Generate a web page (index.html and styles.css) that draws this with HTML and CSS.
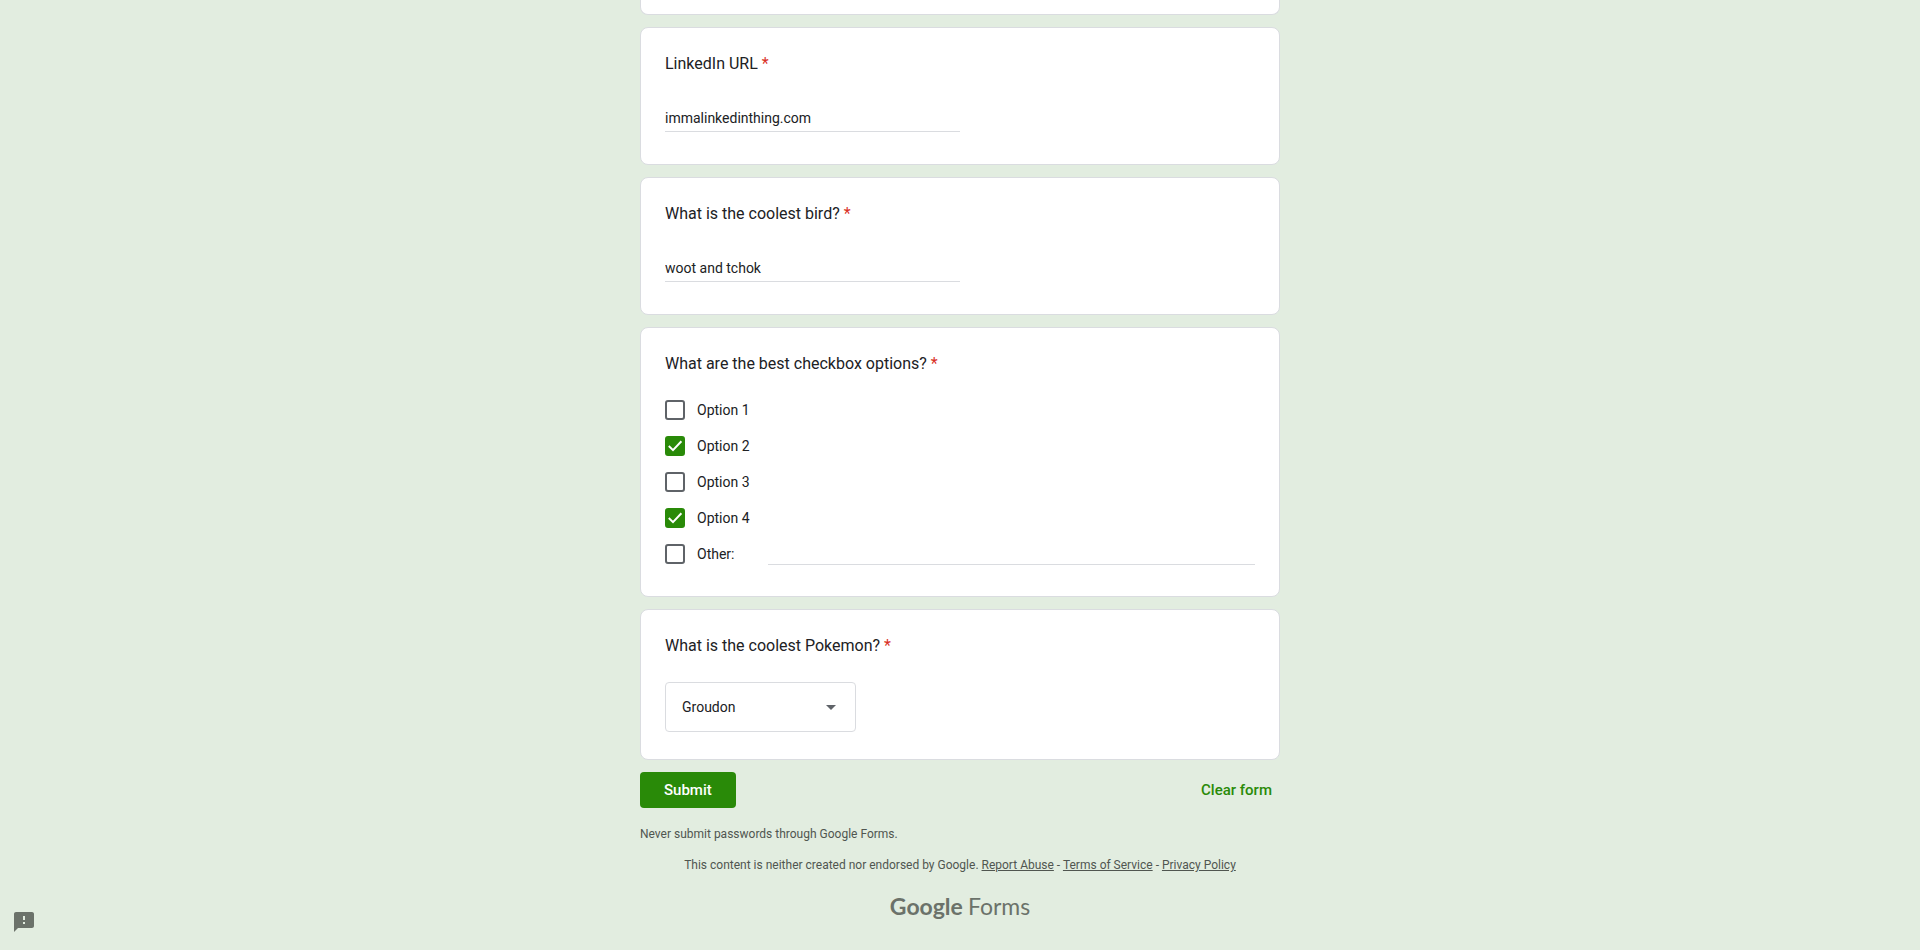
FILE: index.html
```html
<!DOCTYPE html>
<html lang="en">
<head>
<meta charset="utf-8">
<meta name="viewport" content="width=device-width, initial-scale=1">
<title>Google Forms</title>
<link rel="stylesheet" href="styles.css">
</head>
<body>
<main class="page">
  <form class="form">
    <section class="card card-previous"></section>

    <section class="card">
      <label class="title" for="linkedin">LinkedIn URL <span class="required">*</span></label>
      <input class="text-input" id="linkedin" type="text" value="immalinkedinthing.com">
    </section>

    <section class="card">
      <label class="title" for="bird">What is the coolest bird? <span class="required">*</span></label>
      <input class="text-input" id="bird" type="text" value="woot and tchok">
    </section>

    <section class="card" role="group" aria-labelledby="options-title">
      <div class="title" id="options-title">What are the best checkbox options? <span class="required">*</span></div>
      <div class="options">
        <label class="option"><span class="check"><input type="checkbox"><svg class="tick" viewBox="0 0 20 20"><path d="M3.8 10 8 14.1 16.4 5.3"/></svg></span><span>Option 1</span></label>
        <label class="option"><span class="check"><input type="checkbox" checked><svg class="tick" viewBox="0 0 20 20"><path d="M3.8 10 8 14.1 16.4 5.3"/></svg></span><span>Option 2</span></label>
        <label class="option"><span class="check"><input type="checkbox"><svg class="tick" viewBox="0 0 20 20"><path d="M3.8 10 8 14.1 16.4 5.3"/></svg></span><span>Option 3</span></label>
        <label class="option"><span class="check"><input type="checkbox" checked><svg class="tick" viewBox="0 0 20 20"><path d="M3.8 10 8 14.1 16.4 5.3"/></svg></span><span>Option 4</span></label>
        <div class="other">
          <label class="option"><span class="check"><input type="checkbox"><svg class="tick" viewBox="0 0 20 20"><path d="M3.8 10 8 14.1 16.4 5.3"/></svg></span><span>Other:</span></label>
          <input class="other-input" type="text" aria-label="Other response">
        </div>
      </div>
    </section>

    <section class="card">
      <label class="title" for="pokemon">What is the coolest Pokemon? <span class="required">*</span></label>
      <div class="select">
        <select id="pokemon"><option selected>Groudon</option></select>
        <svg class="arrow" viewBox="0 0 10 5"><path d="M0 0h10L5 5z"/></svg>
      </div>
    </section>

    <div class="actions">
      <button class="submit" type="submit">Submit</button>
      <button class="clear" type="reset">Clear form</button>
    </div>
  </form>
  <p class="warning">Never submit passwords through Google Forms.</p>
  <p class="legal">This content is neither created nor endorsed by Google. <a href="#">Report Abuse</a> - <a href="#">Terms of Service</a> - <a href="#">Privacy Policy</a></p>
  <a class="logo" href="#"><span class="logo-brand">Google</span><span>Forms</span></a>
</main>
<button class="feedback" type="button" aria-label="Report a problem">
  <svg viewBox="0 0 24 24"><path d="M20 2H4c-1.100 0-2 .9-2 2v18l4-4h14c1.100 0 2-.9 2-2V4c0-1.100-.9-2-2-2zm-7 12h-2v-2h2v2zm0-4h-2V6h2v4z"/></svg>
</button>
</body>
</html>
```
FILE: styles.css
```css
* {
  box-sizing: border-box;
}

body {
  margin: 0;
  background: #e2ede0;
  color: #202124;
  font: 14px/20px Roboto, sans-serif;
}

input,
select,
button {
  font: inherit;
  color: inherit;
}

.page {
  max-width: 640px;
  margin: 0 auto;
}

.form {
  display: flex;
  flex-direction: column;
  gap: 12px;
}

.card {
  padding: 24px;
  background: #fff;
  border: 1px solid #dadce0;
  border-radius: 8px;
}

.card-previous {
  padding: 0 0 14px;
  border-top: 0;
  border-top-left-radius: 0;
  border-top-right-radius: 0;
}

.title {
  display: block;
  font-size: 16px;
  line-height: 24px;
}

.required {
  color: #d93025;
}

.text-input {
  display: block;
  width: 50%;
  height: 26px;
  margin: 30px 0 8px;
  padding: 0 0 2px;
  border: 0;
  border-bottom: 1px solid #dadce0;
  background: none;
  outline: none;
}

.options {
  margin-top: 16px;
}

.option {
  display: flex;
  align-items: center;
  gap: 12px;
  height: 36px;
}

.check {
  display: grid;
  width: 20px;
  height: 20px;
}

.check input,
.tick {
  grid-area: 1 / 1;
  width: 20px;
  height: 20px;
  margin: 0;
}

.check input {
  appearance: none;
  border: 2px solid #5f6368;
  border-radius: 3px;
}

.check input:checked {
  background: #298a08;
  border-color: #298a08;
}

.tick {
  visibility: hidden;
  pointer-events: none;
  fill: none;
  stroke: #fff;
  stroke-width: 2;
}

.check input:checked + .tick {
  visibility: visible;
}

.other {
  display: flex;
  align-items: center;
  gap: 34px;
}

.other-input {
  flex: 1;
  min-width: 0;
  height: 22px;
  padding: 0;
  border: 0;
  border-bottom: 1px solid #dadce0;
  background: none;
  outline: none;
}

.select {
  display: grid;
  align-items: center;
  width: 191px;
  margin: 24px 0 3px;
}

.select select,
.arrow {
  grid-area: 1 / 1;
}

.select select {
  appearance: none;
  height: 50px;
  padding: 0 16px;
  border: 1px solid #dadce0;
  border-radius: 4px;
  background: #fff;
}

.arrow {
  justify-self: end;
  width: 10px;
  height: 5px;
  margin-right: 20px;
  fill: #5f6368;
  pointer-events: none;
}

.actions {
  display: flex;
  justify-content: space-between;
}

.submit,
.clear {
  height: 36px;
  border: 0;
  border-radius: 4px;
  font-size: 15px;
  font-weight: 500;
}

.submit {
  padding: 0 24px;
  background: #298a08;
  color: #fff;
}

.clear {
  padding: 0 8px;
  background: none;
  color: #298a08;
}

.warning {
  margin: 16px 0 0;
  color: #505650;
  font-size: 12px;
}

.legal {
  margin: 11px 0 0;
  color: #505650;
  font-size: 12px;
  text-align: center;
}

.legal a {
  color: inherit;
}

.logo {
  display: flex;
  justify-content: center;
  gap: 5px;
  margin-top: 15px;
  color: #6b726a;
  font-family: Lato, Roboto, sans-serif;
  font-size: 23px;
  line-height: 32px;
  text-decoration: none;
}

.logo-brand {
  font-weight: 700;
}

.feedback {
  position: fixed;
  left: 12px;
  bottom: 16px;
  width: 24px;
  height: 24px;
  padding: 0;
  border: 0;
  background: none;
}

.feedback svg {
  display: block;
  fill: #6b726a;
}
```
